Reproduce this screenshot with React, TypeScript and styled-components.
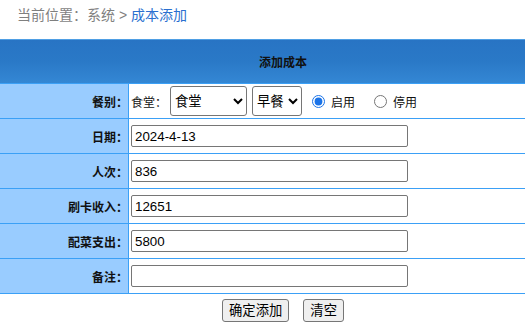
import React from "react";
import styled, { createGlobalStyle } from "styled-components";

const Global = createGlobalStyle`
  html, body { margin: 0; padding: 0; background: #fff; overflow: hidden; }
  body { font-family: "Liberation Sans", Arial, "Noto Sans CJK SC", sans-serif; }
`;

const CJK = `"Liberation Sans", Arial, "Noto Sans CJK SC", sans-serif`;

const Viewport = styled.div`
  width: 100%;
  overflow: hidden;
`;

const Page = styled.div`
  width: 566px;
`;

const Crumb = styled.div`
  height: 39px;
  box-sizing: border-box;
  padding: 5px 0 0 17px;
  font-family: ${CJK};
  font-size: 14px;
  line-height: 20px;
  color: #7f7f7f;
`;

const CrumbLink = styled.span`
  color: #2a6fcf;
`;

const Header = styled.div`
  height: 45px;
  box-sizing: border-box;
  border-bottom: 1px solid #3ba0f6;
  border-top: 1px solid #4f9fe4;
  background: linear-gradient(to bottom, #2874c4 0%, #2a79c7 50%, #3487d4 100%);
  display: flex;
  align-items: center;
  justify-content: center;
  font-family: ${CJK};
  font-size: 12px;
  font-weight: bold;
  color: #111;
`;

const Row = styled.div`
  display: grid;
  grid-template-columns: 129px 1fr;
  height: 35px;
  box-sizing: border-box;
  border-bottom: 1px solid #3ba0f6;
`;

const Label = styled.div`
  background: #99ccff;
  border-right: 1px solid #3ba0f6;
  display: flex;
  align-items: center;
  justify-content: flex-end;
  font-family: ${CJK};
  font-size: 12px;
  font-weight: bold;
  color: #111;
`;

const Cell = styled.div`
  display: flex;
  align-items: center;
  padding-left: 2px;
  font-family: ${CJK};
  font-size: 12px;
  color: #111;
`;

const TextInput = styled.input`
  width: 277px;
  height: 22px;
  box-sizing: border-box;
  border: 1px solid #767676;
  border-radius: 2px;
  padding: 1px 3px 0;
  font-family: ${CJK};
  font-size: 13.333px;
  color: #000;
  outline: none;
`;

const Select = styled.select<{ $w: number }>`
  width: ${(p) => p.$w}px;
  height: 30px;
  box-sizing: border-box;
  margin-left: ${(p) => (p.$w > 60 ? 3 : 5)}px;
  font-family: ${CJK};
  font-size: 13.333px;
  color: #000;
  background: #fff;
  border: 1px solid #767676;
  border-radius: 3px;
`;

const Radio = styled.input`
  width: 13px;
  height: 13px;
  margin: 0 3px 0 ${(p) => (p.defaultChecked ? 10 : 19)}px;
  accent-color: #1a73e8;
`;

const RadioText = styled.span`
  margin-left: 3px;
`;

const Actions = styled.div`
  display: flex;
  justify-content: center;
  gap: 14px;
  padding-top: 5px;
`;

const Button = styled.button`
  height: 23px;
  box-sizing: border-box;
  padding: 0 6px;
  border: 1px solid #767676;
  border-radius: 3px;
  background: #efefef;
  font-family: ${CJK};
  font-size: 13.333px;
  line-height: 20px;
  color: #000;
`;

const fields: [string, string][] = [
  ["日期：", "2024-4-13"],
  ["人次：", "836"],
  ["刷卡收入：", "12651"],
  ["配菜支出：", "5800"],
  ["备注：", ""],
];

export default function App() {
  return (
    <Viewport>
      <Global />
      <Page>
        <Crumb>
          当前位置：系统 &gt; <CrumbLink>成本添加</CrumbLink>
        </Crumb>
        <Header>添加成本</Header>
        <Row>
          <Label>餐别：</Label>
          <Cell>
            食堂：
            <Select $w={77} defaultValue="食堂">
              <option>食堂</option>
            </Select>
            <Select $w={50} defaultValue="早餐">
              <option>早餐</option>
              <option>午餐</option>
              <option>晚餐</option>
            </Select>
            <Radio type="radio" name="st" defaultChecked />
            <RadioText>启用</RadioText>
            <Radio type="radio" name="st" />
            <RadioText>停用</RadioText>
          </Cell>
        </Row>
        {fields.map(([l, v]) => (
          <Row key={l}>
            <Label>{l}</Label>
            <Cell>
              <TextInput defaultValue={v} />
            </Cell>
          </Row>
        ))}
        <Actions>
          <Button>确定添加</Button>
          <Button>清空</Button>
        </Actions>
      </Page>
    </Viewport>
  );
}
